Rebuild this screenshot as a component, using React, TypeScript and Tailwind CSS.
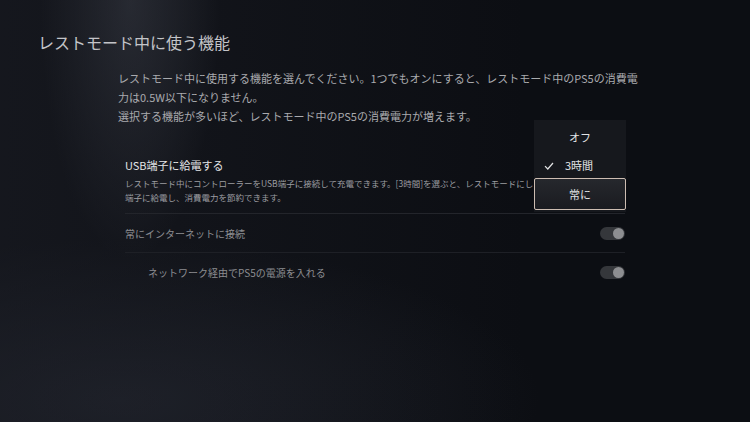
import React from 'react';

const font = { fontFamily: '"Noto Sans CJK JP", "Noto Sans", sans-serif' };

function Toggle() {
  return (
    <div className="w-[25px] h-[13px] rounded-full bg-[#35373b] flex items-center justify-end pr-[1px]">
      <div className="w-[11px] h-[11px] rounded-full bg-[#8d8e91]" />
    </div>
  );
}

export default function App() {
  return (
    <div
      className="relative w-[750px] h-[422px] overflow-hidden bg-[#0c0e13] text-[#c4c5c8]"
      style={font}
    >
      {/* light beam + floor glow */}
      <div className="absolute inset-0 bg-[radial-gradient(ellipse_90px_260px_at_130px_0px,rgba(120,125,140,0.3),transparent)]" />
      <div className="absolute inset-0 bg-[radial-gradient(ellipse_420px_160px_at_120px_400px,rgba(50,54,66,0.45),transparent)]" />
      <div className="absolute inset-0 bg-[linear-gradient(90deg,rgba(30,32,40,0.5),transparent_70%)]" />

      <div className="relative">
        <h1 className="pl-[38px] pt-[30px] text-[16px] leading-[24px] text-[#c3c4c8]">
          レストモード中に使う機能
        </h1>

        <div className="ml-[118px] mt-[15px] w-[525px] text-[11px] leading-[19px] text-[#a9aaae]">
          <p>
            レストモード中に使用する機能を選んでください。1つでもオンにすると、レストモード中のPS5の消費電力は0.5W以下になりません。
          </p>
          <p>選択する機能が多いほど、レストモード中のPS5の消費電力が増えます。</p>
        </div>

        <div className="ml-[125px] mt-[30px] w-[500px]">
          <div className="pb-[9px] border-b border-[#23252b]">
            <div className="text-[11px] leading-[18px] text-[#e4e5e7]">USB端子に給電する</div>
            <p className="mt-[2px] text-[8.5px] leading-[14px] text-[#9c9da1] whitespace-nowrap">
              レストモード中にコントローラーをUSB端子に接続して充電できます。[3時間]を選ぶと、レストモードにし
              <br />
              端子に給電し、消費電力を節約できます。
            </p>
          </div>

          <div className="h-[39px] flex items-center justify-between border-b border-[#1e2026] text-[10px] text-[#8c8d91]">
            <span>常にインターネットに接続</span>
            <Toggle />
          </div>

          <div className="h-[38px] flex items-center justify-between text-[10px] text-[#8c8d91]">
            <span className="pl-[23px]">ネットワーク経由でPS5の電源を入れる</span>
            <Toggle />
          </div>
        </div>
      </div>

      {/* dropdown */}
      <div className="absolute left-[534px] top-[120px] w-[92px] h-[92px] bg-[#16181d] flex flex-col text-[11px] text-[#e2e3e5]">
        <div className="h-[33px] pt-[1px] flex items-center justify-center">オフ</div>
        <div className="h-[25px] flex items-center pl-[10px] gap-[11px]">
          <svg width="10" height="8" viewBox="0 0 10 8" fill="none">
            <path d="M1 4.2 L3.8 7 L9 1" stroke="#e2e3e5" strokeWidth="1.2" />
          </svg>
          <span>3時間</span>
        </div>
        <div className="h-[32px] flex items-center justify-center rounded-[2px] border-[1.5px] border-[#cdbdb2] bg-[linear-gradient(180deg,#26282d,#1a1b20)]">
          常に
        </div>
      </div>
    </div>
  );
}
